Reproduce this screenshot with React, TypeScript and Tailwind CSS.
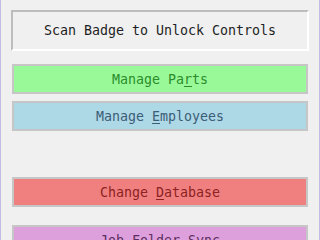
import React from "react";

const font = { fontFamily: '"DejaVu Sans Mono", "Liberation Mono", monospace' };

function Btn({
  bg,
  fg,
  pre,
  u,
  post,
  className = "",
}: {
  bg: string;
  fg: string;
  pre: string;
  u: string;
  post: string;
  className?: string;
}) {
  return (
    <div
      className={`mx-px h-[30px] shrink-0 border-2 border-[#c6c6c6] flex items-center justify-center pt-[2px] text-[13.3px] leading-none ${bg} ${fg} ${className}`}
    >
      <span className="whitespace-pre">
        {pre}
        <span className="underline underline-offset-2">{u}</span>
        {post}
      </span>
    </div>
  );
}

export default function App() {
  return (
    <div
      className="w-[320px] h-[240px] overflow-hidden bg-[#f0f0f0] border-l border-r border-[#c3bde6] flex flex-col px-[10px] pt-[10px]"
      style={font}
    >
      <div className="h-[41px] shrink-0 border-t-2 border-l-2 border-[#bdbdbd] border-b-2 border-r-2 border-b-white border-r-white flex items-center justify-center pt-[1px] text-[13.3px] text-[#1e1e1e] leading-none">
        Scan Badge to Unlock Controls
      </div>
      <Btn
        className="mt-[13px]"
        bg="bg-[#99f999]"
        fg="text-[#2c8c2c]"
        pre="Manage Pa"
        u="r"
        post="ts"
      />
      <Btn
        className="mt-[7px]"
        bg="bg-[#add8e6]"
        fg="text-[#3d5d77]"
        pre="Manage "
        u="E"
        post="mployees"
      />
      <Btn
        className="mt-[46px]"
        bg="bg-[#f08080]"
        fg="text-[#8c2222]"
        pre="Change "
        u="D"
        post="atabase"
      />
      <Btn
        className="mt-[18px]"
        bg="bg-[#dda0dd]"
        fg="text-[#5e2f5e]"
        pre="Job "
        u="F"
        post="older Sync"
      />
    </div>
  );
}
